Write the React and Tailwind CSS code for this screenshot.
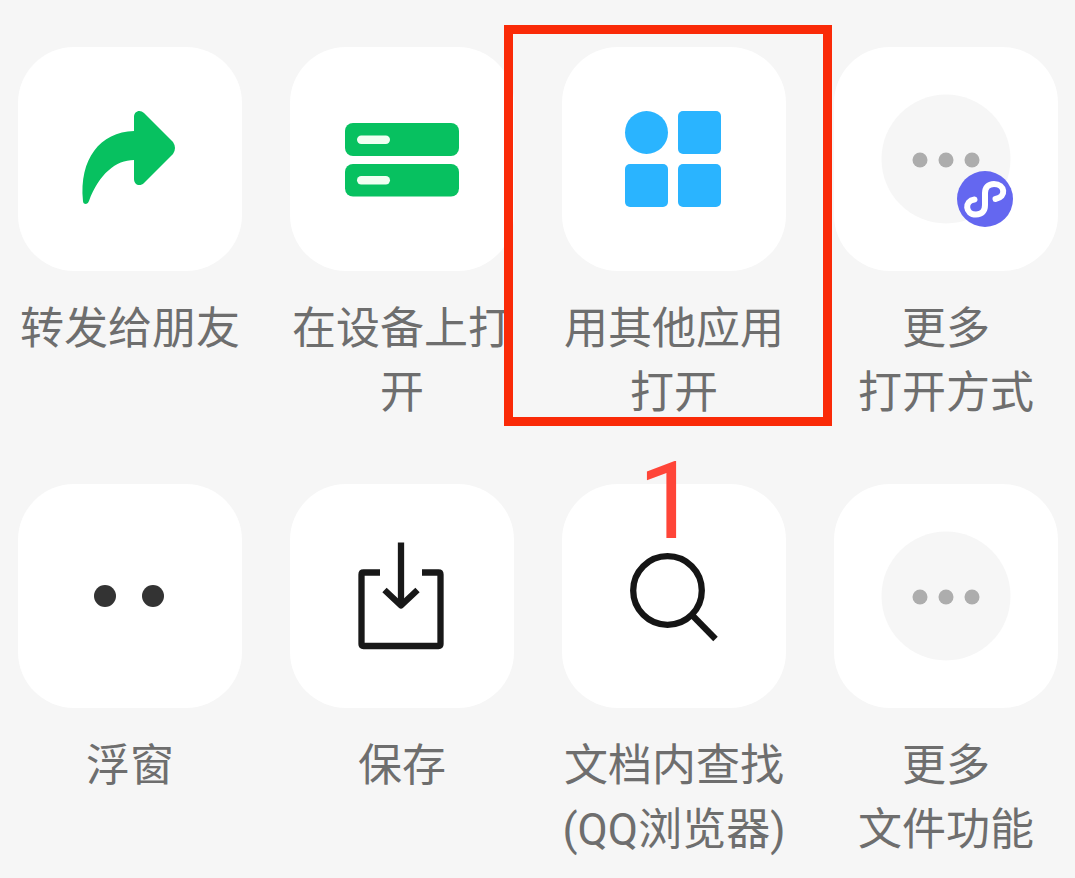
const icons = {
  forward: (
    <path
      fill="#07c160"
      d="M116 84V70C116 64 122 62 126 66L155 95Q159 101 155 107L126 136C122 140 116 138 116 132V113C98 113 81 127 71 154Q70 157 68 157Q65 157 65 154C61 112 82 85 116 84Z"
    />
  ),
  device: (
    <>
      <rect x="55" y="76" width="114" height="33" rx="8" fill="#07c160" />
      <rect x="55" y="117" width="114" height="32.5" rx="8" fill="#07c160" />
      <rect x="67" y="88.5" width="33" height="8.5" rx="4.2" fill="#f0fff2" />
      <rect x="67" y="129" width="33" height="8.5" rx="4.2" fill="#f0fff2" />
    </>
  ),
  apps: (
    <g fill="#2ab4ff">
      <circle cx="84.5" cy="85.5" r="21.5" />
      <rect x="116" y="64" width="43" height="43" rx="5" />
      <rect x="63" y="117" width="43" height="43" rx="5" />
      <rect x="116" y="117" width="43" height="43" rx="5" />
    </g>
  ),
  more: (
    <>
      <circle cx="112" cy="112" r="64.5" fill="#f6f6f6" />
      <g fill="#adadad">
        <circle cx="86" cy="113" r="7.5" />
        <circle cx="112" cy="113" r="7.5" />
        <circle cx="138" cy="113" r="7.5" />
      </g>
    </>
  ),
  program: (
    <>
      <circle cx="151" cy="152" r="28" fill="#6467f0" />
      <path
        fill="none"
        stroke="#fff"
        strokeWidth="6"
        strokeLinecap="round"
        d="M161.5 152C173 150 171 137 160 137C154 137 151 141 151 146V158C151 164 148 167.5 142 167.5C131 167.5 130 154 140.5 152.5"
      />
    </>
  ),
  float: (
    <g fill="#333">
      <circle cx="87" cy="112" r="11" />
      <circle cx="135" cy="112" r="11" />
    </g>
  ),
  save: (
    <g fill="none" stroke="#181818" strokeWidth="6.3" strokeLinejoin="round">
      <path d="M90 88.5H73.5Q71.5 88.5 71.5 90.5V160Q71.5 162 73.5 162H148.5Q150.5 162 150.5 160V90.5Q150.5 88.5 148.5 88.5H132" />
      <path d="M111 58.5V121" />
      <path d="M94.5 106L111 121.5L127.5 106" />
    </g>
  ),
  search: (
    <g fill="none" stroke="#151515" strokeWidth="6.3">
      <circle cx="105.5" cy="106.5" r="34.3" />
      <path d="M129.5 130.5L153.5 155" />
    </g>
  ),
};

const actions = [
  { id: "forward", icon: icons.forward, lines: ["转发给朋友"] },
  { id: "device", icon: icons.device, lines: ["在设备上打开"] },
  { id: "apps", icon: icons.apps, lines: ["用其他应用打开"], step: "1" },
  {
    id: "more-open",
    icon: (
      <>
        {icons.more}
        {icons.program}
      </>
    ),
    lines: ["更多", "打开方式"],
  },
  { id: "float", icon: icons.float, lines: ["浮窗"] },
  { id: "save", icon: icons.save, lines: ["保存"] },
  { id: "search", icon: icons.search, lines: ["文档内查找", "(QQ浏览器)"] },
  { id: "more-file", icon: icons.more, lines: ["更多", "文件功能"] },
];

function Action({ icon, lines, step }) {
  return (
    <div className="relative">
      <button type="button" className="flex w-full flex-col gap-[26px] text-center">
        <span className="block aspect-square w-full rounded-[56px] bg-white">
          <svg viewBox="0 0 224 224" className="size-full" aria-hidden="true">
            {icon}
          </svg>
        </span>
        <span className="block w-full text-[44px] leading-[64px] text-[#6e6e6e]">
          {lines.map((line) => (
            <span key={line} className="block">
              {line}
            </span>
          ))}
        </span>
      </button>

      {/* highlighted step */}
      {step && (
        <div className="pointer-events-none absolute -top-[22px] -right-[46px] -bottom-px -left-[58px] z-10 border-9 border-[#fa2a08]">
          <span className="absolute top-full left-1/2 -translate-x-1/2 pt-[31px] text-[107px] leading-[107px] text-[#ff4538]">
            {step}
          </span>
        </div>
      )}
    </div>
  );
}

function App() {
  return (
    <main className="min-h-screen bg-[#f6f6f6] pt-[47px] pr-[17px] pl-[18px] font-['Roboto','Noto_Sans_CJK_SC',sans-serif]">
      <div className="grid grid-cols-4 gap-x-12 gap-y-[59px]">
        {actions.map((action) => (
          <Action key={action.id} {...action} />
        ))}
      </div>
    </main>
  );
}

export default App;
